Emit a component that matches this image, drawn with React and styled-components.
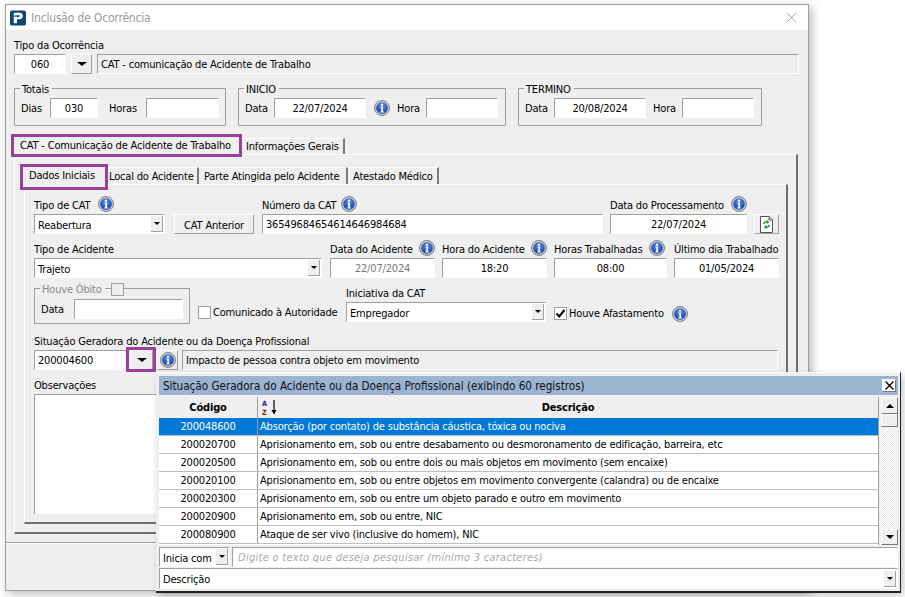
import React from "react";
import styled, { createGlobalStyle } from "styled-components";

const Global = createGlobalStyle`
  html, body { margin: 0; padding: 0; background: #fff; }
  * { box-sizing: border-box; }
  body {
    font-family: "DejaVu Sans Condensed", "Noto Sans", sans-serif;
    font-size: 11px;
    letter-spacing: -0.18px;
    color: #000;
  }
`;

const MARK = "#9a3f9e";
const EDGE = "#a0a0a0";
const FACE = "#efefef";

const Page = styled.div`
  position: relative;
  width: 905px;
  height: 597px;
  padding: 4px 0 0 5px;
  overflow: hidden;
`;

const Window = styled.div`
  width: 804px;
  height: 587px;
  display: flex;
  flex-direction: column;
  background: ${FACE};
  border: 1px solid ${EDGE};
  box-shadow: 3px 3px 9px rgba(0, 0, 0, 0.28);
`;

const TitleBar = styled.div`
  height: 25px;
  flex: none;
  display: flex;
  align-items: center;
  padding: 0 11px 0 3px;
  gap: 5px;
  background: #fff;
  color: #999;
  font-size: 12px;
`;

const TitleText = styled.span`
  flex: 1;
`;

const Body = styled.div`
  height: 512px;
  flex: none;
  padding: 8px 8px 0;
`;

const Footer = styled.div`
  flex: 1;
  border-top: 1px solid ${EDGE};
  box-shadow: inset 0 1px 0 #fff;
`;

const Label = styled.div`
  height: ${(p) => p.$h || 16}px;
  margin-bottom: ${(p) => (p.$gap === undefined ? 2 : p.$gap)}px;
  display: flex;
  align-items: center;
  gap: ${(p) => p.$iconGap || 6}px;
  white-space: nowrap;
`;

const LabelText = styled.span`
  padding-top: ${(p) => (p.$low ? 2 : 0)}px;
`;

const Row = styled.div`
  display: flex;
  align-items: ${(p) => p.$align || "flex-end"};
  margin-top: ${(p) => p.$top || 0}px;
`;

const Col = styled.div`
  width: ${(p) => p.$w}px;
  flex: none;
  margin-top: ${(p) => p.$top || 0}px;
`;

const Field = styled.div`
  width: ${(p) => (p.$w ? `${p.$w}px` : "100%")};
  height: ${(p) => p.$h || 20}px;
  flex: none;
  display: flex;
  align-items: center;
  justify-content: ${(p) => (p.$center ? "center" : "flex-start")};
  padding: 0 3px;
  white-space: nowrap;
  background: ${(p) => (p.$flat ? "transparent" : "#fff")};
  color: ${(p) => (p.$muted ? "#777" : "#000")};
  border-top: 1px solid ${EDGE};
  border-left: 1px solid ${EDGE};
  border-right: 1px solid #fff;
  border-bottom: 1px solid #fff;
`;

const Button = styled.div`
  position: relative;
  width: ${(p) => p.$w}px;
  height: 20px;
  flex: none;
  display: flex;
  align-items: center;
  justify-content: center;
  padding-top: ${(p) => (p.$low ? 2 : 0)}px;
  background: ${FACE};
  border-top: 1px solid #fff;
  border-left: 1px solid #fff;
  border-right: 1px solid ${EDGE};
  border-bottom: 1px solid ${EDGE};

  ${(p) =>
    p.$marked &&
    `&::after {
      content: "";
      position: absolute;
      top: -4px;
      left: -6px;
      right: -4px;
      bottom: -3px;
      border: 3px solid ${MARK};
    }`}
`;

const Caret = styled.i`
  width: 0;
  height: 0;
  display: block;
  border-left: ${(p) => p.$s}px solid transparent;
  border-right: ${(p) => p.$s}px solid transparent;
  border-top: ${(p) => p.$s - (p.$s > 4 ? 1 : 0)}px solid #000;
`;

const SelectBox = styled.div`
  width: ${(p) => (p.$w ? `${p.$w}px` : "100%")};
  height: ${(p) => p.$h || 20}px;
  flex: none;
  display: flex;
  align-items: center;
  justify-content: space-between;
  padding: 1px 1px 1px 3px;
  background: #fff;
  border-top: 1px solid ${EDGE};
  border-left: 1px solid ${EDGE};
  border-right: 1px solid #fff;
  border-bottom: 1px solid #fff;
`;

const SelectValue = styled.span`
  padding-top: 2px;
`;

const SelectArrow = styled.span`
  width: 12px;
  height: 16px;
  display: flex;
  align-items: center;
  justify-content: center;
  background: ${FACE};
  border-right: 1px solid ${EDGE};
  border-bottom: 1px solid ${EDGE};
`;

const Lookup = styled.div`
  display: flex;
  gap: ${(p) => p.$gap || 5}px;
`;

const GroupRow = styled.div`
  display: flex;
  gap: 12px;
  margin-top: 14px;
  margin-bottom: 8px;
`;

const Group = styled.div`
  position: relative;
  width: ${(p) => p.$w}px;
  height: ${(p) => p.$h || 38}px;
  flex: none;
  display: flex;
  align-items: flex-start;
  padding: ${(p) => p.$pad || "9px 6px"};
  border: 1px solid ${EDGE};
`;

const GroupTitle = styled.div`
  position: absolute;
  top: -7px;
  left: 5px;
  height: 14px;
  display: flex;
  align-items: center;
  gap: ${(p) => p.$gap || 0}px;
  color: ${(p) => p.$color || "#000"};
  white-space: nowrap;
`;

const GroupTitleText = styled.span`
  padding: 0 3px 0 2px;
  background: ${FACE};
`;

const GroupCheck = styled.span`
  width: 13px;
  height: 13px;
  display: block;
  border: 1px solid ${EDGE};
  background: ${FACE};
`;

const GroupLabel = styled.span`
  width: ${(p) => p.$w}px;
  height: 20px;
  flex: none;
  display: flex;
  align-items: center;
  white-space: nowrap;
  margin-left: ${(p) => p.$left || 0}px;
`;

const IconSlot = styled.span`
  width: ${(p) => p.$w}px;
  height: 20px;
  flex: none;
  display: flex;
  align-items: center;
  justify-content: center;
  margin-top: ${(p) => p.$top || 0}px;
`;

const TabStrip = styled.div`
  position: relative;
  z-index: 1;
  display: flex;
  align-items: flex-end;
  height: 20px;
  margin-left: ${(p) => p.$left}px;
`;

const Tab = styled.div`
  width: ${(p) => p.$w}px;
  height: ${(p) => p.$h}px;
  flex: none;
  display: flex;
  align-items: center;
  padding-left: ${(p) => p.$pad}px;
  white-space: nowrap;
  background: ${FACE};
  margin-bottom: ${(p) => p.$drop || 0}px;
  ${(p) =>
    p.$marked
      ? `border: 3px solid ${MARK};`
      : `border-top: 1px solid #fff; border-right: 2px solid #7c7c7c;`}
`;

const TabText = styled.span`
  position: relative;
  top: ${(p) => p.$shift || 0}px;
`;

const TabPanel = styled.div`
  width: ${(p) => p.$w}px;
  height: ${(p) => p.$h}px;
  padding: ${(p) => p.$pad};
  border-top: 1px solid #fff;
  border-left: 1px solid #fff;
  border-right: 2px solid #6e6e6e;
  border-bottom: 2px solid #6e6e6e;
`;

const CheckItem = styled.div`
  width: ${(p) => p.$w}px;
  flex: none;
  display: flex;
  align-items: center;
  gap: 2px;
  height: 13px;
  margin-top: ${(p) => p.$top}px;
  white-space: nowrap;
`;

const CheckBox = styled.span`
  width: 13px;
  height: 13px;
  flex: none;
  display: flex;
  align-items: center;
  justify-content: center;
  background: #fff;
  border: 1px solid ${EDGE};
`;

const Notes = styled.div`
  width: 745px;
  height: 120px;
  background: #fff;
  border-top: 1px solid ${EDGE};
  border-left: 1px solid ${EDGE};
`;

const Popup = styled.div`
  position: absolute;
  left: 156px;
  top: 372px;
  width: 745px;
  height: 221px;
  display: flex;
  flex-direction: column;
  padding: 3px 2px 2px 3px;
  background: ${FACE};
  border-top: 1px solid #fff;
  border-right: 1px solid #222;
  border-bottom: 2px solid #222;
  box-shadow: 3px 3px 8px rgba(0, 0, 0, 0.2);
`;

const PopupTitle = styled.div`
  height: 19px;
  flex: none;
  display: flex;
  align-items: center;
  justify-content: space-between;
  padding: 0 2px 0 4px;
  margin-bottom: 2px;
  background: #9ab4d2;
  color: #111;
  font-size: 11.6px;
  letter-spacing: 0;
`;

const CloseBox = styled.span`
  width: 14px;
  height: 13px;
  display: flex;
  align-items: center;
  justify-content: center;
  background: #fff;
  border: 1px solid #777;
  border-top-color: #fff;
  border-left-color: #fff;
`;

const ListArea = styled.div`
  height: 148px;
  flex: none;
  display: flex;
  gap: 2px;
`;

const Table = styled.div`
  width: 720px;
  flex: none;
  overflow: hidden;
  background: #fff;
  border-right: 1px solid ${EDGE};
`;

const HeadRow = styled.div`
  height: 21px;
  display: grid;
  grid-template-columns: 99px 1fr;
  align-items: center;
  background: ${FACE};
  font-weight: 700;
`;

const HeadCell = styled.div`
  height: 100%;
  position: relative;
  display: flex;
  align-items: center;
  justify-content: center;
  border-right: ${(p) => (p.$line ? `1px solid ${EDGE}` : "0")};
`;

const SortMark = styled.svg`
  position: absolute;
  left: 4px;
  top: 2px;
`;

const DataRow = styled.div`
  height: 18px;
  display: grid;
  grid-template-columns: 99px 1fr;
  align-items: stretch;
  background: ${(p) => (p.$active ? "#0078d7" : "#fff")};
  color: ${(p) => (p.$active ? "#fff" : "#000")};
  border-bottom: 1px solid #bdbdbd;
`;

const CodeCell = styled.div`
  display: flex;
  align-items: center;
  justify-content: center;
  border-right: 1px solid ${EDGE};
`;

const TextCell = styled.div`
  display: flex;
  align-items: center;
  padding-left: 2px;
  white-space: nowrap;
`;

const ScrollBar = styled.div`
  width: 17px;
  flex: none;
  display: flex;
  flex-direction: column;
  background: repeating-conic-gradient(#fff 0 25%, #e6e6e6 0 50%) 0 0 / 2px 2px;
`;

const ScrollButton = styled.div`
  height: ${(p) => p.$h}px;
  flex: none;
  display: flex;
  align-items: center;
  justify-content: center;
  background: ${FACE};
  margin-top: ${(p) => (p.$end ? "auto" : "0")};
  border-top: 1px solid #fff;
  border-left: 1px solid #fff;
  border-right: 1px solid #777;
  border-bottom: 1px solid #777;
`;

const UpCaret = styled(Caret)`
  transform: rotate(180deg);
`;

const SearchRow = styled.div`
  height: 21px;
  flex: none;
  display: flex;
  gap: 2px;
  margin-top: 2px;
`;

const Hint = styled(Field)`
  flex: 1;
  width: auto;
  color: #aaa;
  font-style: italic;
  padding-left: 5px;
  letter-spacing: 0.28px;
`;

const occurrences = [
  ["200048600", "Absorção (por contato) de substância cáustica, tóxica ou nociva"],
  ["200020700", "Aprisionamento em, sob ou entre desabamento ou desmoronamento de edificação, barreira, etc"],
  ["200020500", "Aprisionamento em, sob ou entre dois ou mais objetos em movimento (sem encaixe)"],
  ["200020100", "Aprisionamento em, sob ou entre objetos em movimento convergente (calandra) ou de encaixe"],
  ["200020300", "Aprisionamento em, sob ou entre um objeto parado e outro em movimento"],
  ["200020900", "Aprisionamento em, sob ou entre, NIC"],
  ["200080900", "Ataque de ser vivo (inclusive do homem), NIC"],
];

const InfoIcon = () => (
  <svg width="16" height="16" viewBox="0 0 16 16" style={{ flex: "none" }}>
    <defs>
      <radialGradient id="infoFill" cx="50%" cy="35%" r="65%">
        <stop offset="0" stopColor="#5d92ea" />
        <stop offset="1" stopColor="#123fa8" />
      </radialGradient>
    </defs>
    <circle cx="8" cy="8" r="7.5" fill="#c4c8d0" stroke="#7f8389" strokeWidth="1" />
    <circle cx="8" cy="8" r="5.8" fill="url(#infoFill)" />
    <circle cx="8" cy="4.6" r="1.2" fill="#fff" />
    <path d="M6.6 6.6H9v5H10v.8H6.2v-.8h1.1V7.4H6.6z" fill="#fff" />
  </svg>
);

const AppLogo = () => (
  <svg width="16" height="16" viewBox="0 0 17 16" style={{ flex: "none", marginLeft: 1 }}>
    <rect width="17" height="16" rx="2" fill="#0f4674" />
    <path d="M4 2.5h6c2.4 0 3.6 1.4 3.6 3.4S12.3 9.4 10 9.4H7.4v4.1H4z" fill="#fff" />
    <rect x="4" y="5" width="4.6" height="2" fill="#39a7e0" />
    <rect x="7.4" y="5" width="2.6" height="2" fill="#0f4674" />
  </svg>
);

const CloseGlyph = ({ size, stroke, color }) => (
  <svg width={size} height={size} viewBox="0 0 16 16">
    <path d="M1 1L15 15M15 1L1 15" stroke={color} strokeWidth={stroke} fill="none" />
  </svg>
);

const RefreshDoc = () => (
  <svg width="15" height="17" viewBox="0 0 15 17">
    <path d="M1.5 .5H10L13.5 4V16.5H1.5z" fill="#fff" stroke="#555" />
    <path d="M10 .5V4H13.5" fill="none" stroke="#555" />
    <path d="M4 8c0-2 1.6-3 3.6-3V3.4L10.4 6 7.6 8.2V6.8C6.4 6.8 5.6 7.2 5.4 8.4z" fill="#3f9a45" />
    <path d="M11 9c0 2-1.6 3-3.6 3v1.6L4.6 11l2.8-2.2v1.4c1.2 0 2-.4 2.2-1.6z" fill="#3f9a45" />
  </svg>
);

const CheckMark = () => (
  <svg width="11" height="11" viewBox="0 0 11 11">
    <path d="M1.5 5.5L4.2 8.5L9.5 2" fill="none" stroke="#000" strokeWidth="2" />
  </svg>
);

const Select = ({ children, w, h }) => (
  <SelectBox $w={w} $h={h}>
    <SelectValue>{children}</SelectValue>
    <SelectArrow>
      <Caret $s={3} />
    </SelectArrow>
  </SelectBox>
);

const Titled = ({ children, info, gap, iconGap }) => (
  <Label $gap={gap} $iconGap={iconGap}>
    <LabelText $low={gap === undefined}>{children}</LabelText>
    {info && <InfoIcon />}
  </Label>
);

export default function App() {
  return (
    <Page>
      <Global />
      <Window>
        <TitleBar>
          <AppLogo />
          <TitleText>Inclusão de Ocorrência</TitleText>
          <CloseGlyph size={11} stroke={1} color="#777" />
        </TitleBar>
        <Body>
          <Label $h={14}>Tipo da Ocorrência</Label>
          <Lookup>
            <Field $w={52} $center>060</Field>
            <Button $w={21}><Caret $s={5} /></Button>
            <Field $w={702} $flat>CAT - comunicação de Acidente de Trabalho</Field>
          </Lookup>

          <GroupRow>
            <Group $w={212}>
              <GroupTitle><GroupTitleText>Totais</GroupTitleText></GroupTitle>
              <GroupLabel $w={29}>Dias</GroupLabel>
              <Field $w={48} $center>030</Field>
              <GroupLabel $w={37} $left={11}>Horas</GroupLabel>
              <Field $w={73} />
            </Group>
            <Group $w={268}>
              <GroupTitle><GroupTitleText>INICIO</GroupTitleText></GroupTitle>
              <GroupLabel $w={29}>Data</GroupLabel>
              <Field $w={92} $center>22/07/2024</Field>
              <IconSlot $w={31}><InfoIcon /></IconSlot>
              <GroupLabel $w={29}>Hora</GroupLabel>
              <Field $w={72} />
            </Group>
            <Group $w={244}>
              <GroupTitle><GroupTitleText>TERMINO</GroupTitleText></GroupTitle>
              <GroupLabel $w={29}>Data</GroupLabel>
              <Field $w={92} $center>20/08/2024</Field>
              <GroupLabel $w={29} $left={7}>Hora</GroupLabel>
              <Field $w={72} />
            </Group>
          </GroupRow>

          <TabStrip $left={-3}>
            <Tab $marked $w={231} $h={23} $pad={6} $drop={-3}>
              CAT - Comunicação de Acidente de Trabalho
            </Tab>
            <Tab $w={103} $h={16} $pad={4}>Informações Gerais</Tab>
          </TabStrip>

          <TabPanel $w={784} $h={380} $pad="9px 0 0 9px">
            <TabStrip $left={-4}>
              <Tab $marked $w={88} $h={26} $pad={6} $drop={-6}>
                <TabText $shift={-2}>Dados Iniciais</TabText>
              </Tab>
              <Tab $w={91} $h={17} $pad={1}>Local do Acidente</Tab>
              <Tab $w={149} $h={17} $pad={5}>Parte Atingida pelo Acidente</Tab>
              <Tab $w={91} $h={17} $pad={5}>Atestado Médico</Tab>
            </TabStrip>

            <TabPanel $w={764} $h={340} $pad="11px 0 0 9px">
              <Row>
                <Col $w={131}>
                  <Titled info iconGap={8}>Tipo de CAT</Titled>
                  <Select>Reabertura</Select>
                </Col>
                <Col $w={9} />
                <Button $w={80} $low>CAT Anterior</Button>
                <Col $w={8} />
                <Col $w={341}>
                  <Titled info iconGap={5}>Número da CAT</Titled>
                  <Field>36549684654614646984684</Field>
                </Col>
                <Col $w={7} />
                <Col $w={137}>
                  <Titled info iconGap={7}>Data do Processamento</Titled>
                  <Field $center>22/07/2024</Field>
                </Col>
                <Col $w={7} />
                <Button $w={25}><RefreshDoc /></Button>
              </Row>

              <Row $top={6}>
                <Col $w={288}>
                  <Titled>Tipo de Acidente</Titled>
                  <Select>Trajeto</Select>
                </Col>
                <Col $w={8} />
                <Col $w={105}>
                  <Titled info>Data do Acidente</Titled>
                  <Field $center $muted>22/07/2024</Field>
                </Col>
                <Col $w={7} />
                <Col $w={105}>
                  <Titled info>Hora do Acidente</Titled>
                  <Field $center>18:20</Field>
                </Col>
                <Col $w={7} />
                <Col $w={113}>
                  <Titled info iconGap={7}>Horas Trabalhadas</Titled>
                  <Field $center>08:00</Field>
                </Col>
                <Col $w={7} />
                <Col $w={105}>
                  <Titled>Último dia Trabalhado</Titled>
                  <Field $center>01/05/2024</Field>
                </Col>
              </Row>

              <Row $top={10} $align="flex-start">
                <Group $w={156} $h={36} $pad="10px 6px">
                  <GroupTitle $color="#888" $gap={6}>
                    <GroupTitleText>Houve Óbito</GroupTitleText>
                    <GroupCheck />
                  </GroupTitle>
                  <GroupLabel $w={33}>Data</GroupLabel>
                  <Field $w={109} />
                </Group>
                <Col $w={8} />
                <CheckItem $w={148} $top={18}>
                  <CheckBox />
                  Comunicado à Autoridade
                </CheckItem>
                <Col $w={200} $top={-3}>
                  <Titled gap={1}>Iniciativa da CAT</Titled>
                  <Select>Empregador</Select>
                </Col>
                <Col $w={8} />
                <CheckItem $w={118} $top={19}>
                  <CheckBox><CheckMark /></CheckBox>
                  Houve Afastamento
                </CheckItem>
                <IconSlot $w={16} $top={16}><InfoIcon /></IconSlot>
              </Row>

              <Row $top={9} />
              <Titled gap={1}>Situação Geradora do Acidente ou da Doença Profissional</Titled>
              <Lookup $gap={4}>
                <Field $w={93}>200004600</Field>
                <Button $w={22} $marked><Caret $s={5} /></Button>
                <Button $w={21}><InfoIcon /></Button>
                <Field $w={596} $flat>Impacto de pessoa contra objeto em movimento</Field>
              </Lookup>

              <Row $top={7} />
              <Titled gap={1}>Observações</Titled>
              <Notes />
            </TabPanel>
          </TabPanel>
        </Body>
        <Footer />
      </Window>

      <Popup>
        <PopupTitle>
          Situação Geradora do Acidente ou da Doença Profissional (exibindo 60 registros)
          <CloseBox><CloseGlyph size={9} stroke={2.4} color="#000" /></CloseBox>
        </PopupTitle>
        <ListArea>
          <Table>
            <HeadRow>
              <HeadCell $line>Código</HeadCell>
              <HeadCell>
                <SortMark width="16" height="18" viewBox="0 0 16 18">
                  <text x="0" y="7" fontSize="7.2" fontWeight="700" fill="#1b1b9a" fontFamily="DejaVu Sans Condensed">A</text>
                  <text x="0" y="15.6" fontSize="7.2" fontWeight="700" fill="#8f1010" fontFamily="DejaVu Sans Condensed">Z</text>
                  <path d="M12 1V12" stroke="#000" strokeWidth="1.2" />
                  <path d="M9.5 11H14.5L12 15.5z" fill="#000" />
                </SortMark>
                Descrição
              </HeadCell>
            </HeadRow>
            {occurrences.map(([code, text], i) => (
              <DataRow key={code} $active={i === 0}>
                <CodeCell>{code}</CodeCell>
                <TextCell>{text}</TextCell>
              </DataRow>
            ))}
          </Table>
          <ScrollBar>
            <ScrollButton $h={17}><UpCaret $s={4} /></ScrollButton>
            <ScrollButton $h={13} />
            <ScrollButton $h={16} $end><Caret $s={4} /></ScrollButton>
          </ScrollBar>
        </ListArea>
        <SearchRow>
          <Select w={71} h={20}>Inicia com</Select>
          <Hint>Digite o texto que deseja pesquisar (mínimo 3 caracteres)</Hint>
        </SearchRow>
        <Select h={21}>Descrição</Select>
      </Popup>
    </Page>
  );
}
